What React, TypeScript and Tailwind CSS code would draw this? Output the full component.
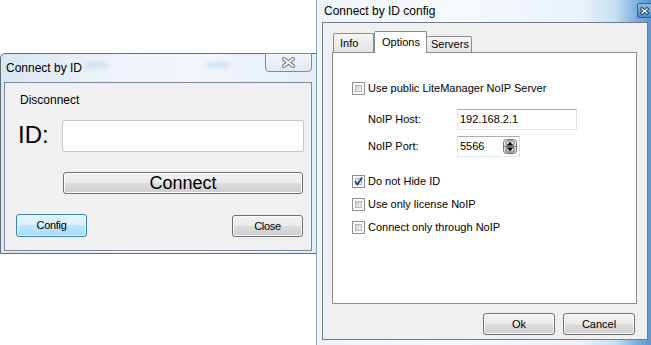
import React from "react";

const btn =
  "flex items-center justify-center rounded-[3px] border border-[#707070] bg-[linear-gradient(to_bottom,#f2f2f2_0%,#ebebeb_50%,#dddddd_50%,#cfcfcf_100%)] shadow-[inset_0_0_0_1px_#fcfcfc] text-black";

function Check({ checked = false }: { checked?: boolean }) {
  return (
    <div className="relative w-[13px] h-[13px] shrink-0 border border-[#8e8f8f] bg-white p-[2px]">
      <div
        className={
          checked
            ? "w-full h-full border border-[#9fb6d3] bg-[linear-gradient(135deg,#d3e4f6,#f4f8fc)]"
            : "w-full h-full border border-[#b3b6bb] bg-[linear-gradient(135deg,#cbcfd5,#f6f6f6)]"
        }
      />
      {checked && (
        <svg className="absolute left-0 top-0" width="11" height="11" viewBox="0 0 11 11">
          <path d="M2 5.2 L4.4 8.4 L9.2 1.6" fill="none" stroke="#2c4a8c" strokeWidth="1.9" />
        </svg>
      )}
    </div>
  );
}

function XGlyph({ w, h, outline, inner, sw }: { w: number; h: number; outline: string; inner: string; sw: number }) {
  return (
    <svg width={w} height={h} viewBox={`0 0 ${w} ${h}`}>
      <path d={`M2 2 L${w - 2} ${h - 2} M${w - 2} 2 L2 ${h - 2}`} stroke={outline} strokeWidth={sw} strokeLinecap="square" fill="none" />
      <path d={`M2 2 L${w - 2} ${h - 2} M${w - 2} 2 L2 ${h - 2}`} stroke={inner} strokeWidth={sw - 2} strokeLinecap="square" fill="none" />
    </svg>
  );
}

export default function App() {
  return (
    <div className="relative w-[651px] h-[345px] overflow-hidden bg-white font-['Liberation_Sans',Arial,sans-serif] text-black">
      {/* Left window: Connect by ID */}
      <div className="absolute left-0 top-[53px] w-[318px] h-[201px] flex flex-col rounded-tl-[5px] border border-[#5f6e7e] bg-[linear-gradient(to_right,#d9e7f2,#eef4f9_35%,#f3f7fb_60%,#e4eef7)] pl-[3px]">
        <div className="relative h-[28px] flex items-center pl-[2px] text-[12px]">
          <div className="absolute left-[82px] top-[8px] w-[22px] h-[6px] rounded-full bg-[#a8c2da] blur-[2px] opacity-40" />
          <div className="absolute left-[202px] top-[8px] w-[24px] h-[6px] rounded-full bg-[#a8c2da] blur-[2px] opacity-40" />
          <span className="relative">Connect by ID</span>
          <div className="absolute right-[5px] top-[-1px] w-[47px] h-[19px] flex items-center justify-center rounded-b-[4px] border border-[#7e8b99] bg-[linear-gradient(to_bottom,#f3f6f9,#e2e8ef)]">
            <XGlyph w={13} h={11} outline="#69747f" inner="#f4f6f8" sw={4} />
          </div>
        </div>
        <div className="w-[308px] h-[169px] border border-[#7d8894] bg-[#f0f0f0] flex flex-col">
          <div className="mt-[10px] ml-[15px] h-[14px] leading-[14px] text-[12px]">Disconnect</div>
          <div className="mt-[13px] ml-[13px] h-[32px] flex items-center">
            <div className="w-[44px] text-[24px] leading-none pb-[3px]">ID:</div>
            <div className="w-[242px] h-[32px] rounded-[2px] border border-[#c2c7ce] bg-white" />
          </div>
          <div className={`${btn} mt-[20px] ml-[58px] w-[240px] h-[22px] text-[18px] leading-none`}>Connect</div>
          <div className="mt-[20px] flex items-end justify-between pl-[11px] pr-[8px]">
            <div className="w-[71px] h-[23px] flex items-center justify-center rounded-[3px] border border-[#3c7fb1] bg-[linear-gradient(to_bottom,#eaf6fd_0%,#d9f0fc_50%,#bee6fd_50%,#a7d9f5_100%)] shadow-[inset_0_0_0_1px_#e0f4fe] text-[11px] tracking-[-0.3px]">
              Config
            </div>
            <div className={`${btn} w-[71px] h-[22px] text-[11px] tracking-[-0.3px]`}>Close</div>
          </div>
        </div>
      </div>

      {/* Right window: Connect by ID config */}
      <div className="absolute left-[316px] top-0 w-[340px] h-[345px] flex flex-col border-l border-[#8aa2b9] bg-[linear-gradient(to_right,#eef5fb_0%,#f7fafd_40%,#eaf3fa_78%,#c5e0f1_88%,#7fb1dd_94%,#4d8bc8_100%)] pl-[5px]">
        <div className="relative h-[22px] flex items-center pl-[2px] text-[12px]">
          <span>Connect by ID config</span>
          <div className="absolute left-[315px] top-[3px] w-[15px] h-[15px] flex items-center justify-center rounded-[2px] border border-[#2f5f93] bg-[linear-gradient(to_bottom,#8dbbe6,#4f88c4)]">
            <XGlyph w={9} h={8} outline="#23456e" inner="#ffffff" sw={3.4} />
          </div>
        </div>
        <div className="w-[326px] h-[318px] border border-[#6e7e8e] bg-[#f0f0f0] flex flex-col">
          {/* Tabs */}
          <div className="mt-[8px] ml-[10px] h-[21px] flex items-end text-[11px] relative z-10">
            <div className="w-[41px] h-[19px] flex items-center pl-[6px] pt-[1px] rounded-t-[2px] border border-b-0 border-[#898c95] bg-[linear-gradient(to_bottom,#f5f5f5,#e3e3e3)]">
              Info
            </div>
            <div className="w-[53px] h-[22px] mb-[-1px] flex items-center pl-[7px] pb-[1px] rounded-t-[2px] border border-b-0 border-[#898c95] bg-white">
              Options
            </div>
            <div className="w-[45px] h-[16px] flex items-center pl-[4px] rounded-t-[2px] border border-b-0 border-l-0 border-[#898c95] bg-[linear-gradient(to_bottom,#f5f5f5,#e3e3e3)]">
              Servers
            </div>
          </div>
          <div className="ml-[9px] w-[305px] h-[252px] border border-[#898c95] bg-white flex flex-col text-[11px]">
            <div className="mt-[29px] ml-[19px] h-[13px] flex items-center gap-[3px]">
              <Check />
              <span>Use public LiteManager NoIP Server</span>
            </div>
            <div className="mt-[14px] ml-[35px] h-[21px] flex items-center">
              <span className="w-[89px]">NoIP Host:</span>
              <div className="w-[120px] h-[21px] flex items-center pl-[2px] border border-[#abadb3] border-r-[#dbdfe6] border-b-[#e3e9ef] border-l-[#e2e3ea] bg-white">
                192.168.2.1
              </div>
            </div>
            <div className="mt-[6px] ml-[35px] h-[21px] flex items-center">
              <span className="w-[89px]">NoIP Port:</span>
              <div className="relative w-[63px] h-[21px] flex items-center pl-[2px] border border-[#abadb3] border-r-[#dbdfe6] border-b-[#e3e9ef] border-l-[#e2e3ea] bg-white">
                5566
                <svg className="absolute right-[2px] top-[2px]" width="14" height="15" viewBox="0 0 14 15">
                  <defs>
                    <linearGradient id="sp" x1="0" y1="0" x2="0" y2="1">
                      <stop offset="0" stopColor="#f6f6f6" />
                      <stop offset="1" stopColor="#d8d8d8" />
                    </linearGradient>
                  </defs>
                  <rect x="0.5" y="0.5" width="13" height="14" rx="3" fill="url(#sp)" stroke="#707070" />
                  <line x1="1" y1="7.5" x2="13" y2="7.5" stroke="#707070" />
                  <rect x="3" y="2" width="8" height="4.5" rx="1" fill="none" stroke="#444" strokeWidth="0.8" />
                  <rect x="3" y="8.5" width="8" height="4.5" rx="1" fill="none" stroke="#444" strokeWidth="0.8" />
                  <path d="M4 6 L7 2.8 L10 6 Z" fill="#000" />
                  <path d="M4 9 L7 12.2 L10 9 Z" fill="#000" />
                </svg>
              </div>
            </div>
            <div className="mt-[18px] ml-[19px] h-[13px] flex items-center gap-[3px]">
              <Check checked />
              <span>Do not Hide ID</span>
            </div>
            <div className="mt-[10px] ml-[19px] h-[13px] flex items-center gap-[3px]">
              <Check />
              <span>Use only license NoIP</span>
            </div>
            <div className="mt-[10px] ml-[19px] h-[13px] flex items-center gap-[3px]">
              <Check />
              <span>Connect only through NoIP</span>
            </div>
          </div>
          <div className="mt-[9px] pr-[12px] flex justify-end gap-[8px] text-[11px]">
            <div className={`${btn} w-[72px] h-[22px]`}>Ok</div>
            <div className={`${btn} w-[72px] h-[22px]`}>Cancel</div>
          </div>
        </div>
      </div>
    </div>
  );
}
